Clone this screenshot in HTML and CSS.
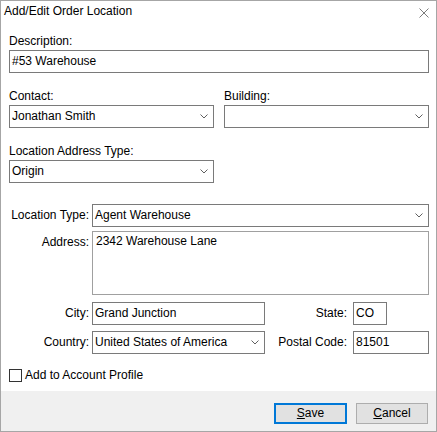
FILE: index.html
```html
<!DOCTYPE html>
<html lang="en">
<head>
<meta charset="utf-8">
<title>Add/Edit Order Location</title>
<link rel="stylesheet" href="styles.css">
</head>
<body>
<div class="dialog">
  <div class="titlebar">
    <span class="title">Add/Edit Order Location</span>
    <svg class="close" width="10" height="10" viewBox="0 0 10 10"><path d="M0.5 0.5 L9.5 9.5 M9.5 0.5 L0.5 9.5" stroke="#7c7c7c" stroke-width="1" fill="none"/></svg>
  </div>
  <div class="form">
    <div class="group">
      <div class="label">Description:</div>
      <div class="field">#53 Warehouse</div>
    </div>
    <div class="pair">
      <div class="group">
        <div class="label">Contact:</div>
        <div class="field select"><span>Jonathan Smith</span><svg class="chev" width="8" height="5" viewBox="0 0 8 5"><polyline points="0.5,0.5 4,4 7.5,0.5" fill="none" stroke="#606060" stroke-width="1"/></svg></div>
      </div>
      <div class="group">
        <div class="label">Building:</div>
        <div class="field select"><span></span><svg class="chev" width="8" height="5" viewBox="0 0 8 5"><polyline points="0.5,0.5 4,4 7.5,0.5" fill="none" stroke="#606060" stroke-width="1"/></svg></div>
      </div>
    </div>
    <div class="group gap16 half">
      <div class="label">Location Address Type:</div>
      <div class="field select"><span>Origin</span><svg class="chev" width="8" height="5" viewBox="0 0 8 5"><polyline points="0.5,0.5 4,4 7.5,0.5" fill="none" stroke="#606060" stroke-width="1"/></svg></div>
    </div>

    <div class="row row-type">
      <div class="rlabel">Location Type:</div>
      <div class="field select span3"><span>Agent Warehouse</span><svg class="chev" width="8" height="5" viewBox="0 0 8 5"><polyline points="0.5,0.5 4,4 7.5,0.5" fill="none" stroke="#606060" stroke-width="1"/></svg></div>
    </div>
    <div class="row row-address">
      <div class="rlabel top">Address:</div>
      <div class="area span3">2342 Warehouse Lane</div>
    </div>
    <div class="row row-city">
      <div class="rlabel">City:</div>
      <div class="field">Grand Junction</div>
      <div class="rlabel wide">State:</div>
      <div class="field state">CO</div>
    </div>
    <div class="row row-country">
      <div class="rlabel">Country:</div>
      <div class="field select"><span>United States of America</span><svg class="chev" width="8" height="5" viewBox="0 0 8 5"><polyline points="0.5,0.5 4,4 7.5,0.5" fill="none" stroke="#606060" stroke-width="1"/></svg></div>
      <div class="rlabel wide">Postal Code:</div>
      <div class="field">81501</div>
    </div>

    <div class="check">
      <span class="box"></span>
      <span class="check-label">Add to Account Profile</span>
    </div>
  </div>
  <div class="footer">
    <div class="btn default"><u>S</u>ave</div>
    <div class="btn"><u>C</u>ancel</div>
  </div>
</div>
</body>
</html>
```
FILE: styles.css
```css
* { box-sizing: border-box; }
html, body { margin: 0; padding: 0; background: #ffffff; }
body {
  font-family: "Liberation Sans", Arial, sans-serif;
  font-size: 12px;
  color: #000;
}
.dialog {
  width: 437px;
  height: 432px;
  border: 1px solid #a6a6a6;
  background: #ffffff;
  display: flex;
  flex-direction: column;
}
.titlebar {
  height: 33px;
  display: flex;
  justify-content: space-between;
  align-items: flex-start;
  padding-left: 3px;
  flex: none;
}
.title {
  line-height: 20px;
}
.close {
  display: block;
  margin-top: 7px;
  margin-right: 7px;
}
.form {
  flex: 1;
  padding: 0 7px 0 8px;
  display: flex;
  flex-direction: column;
}
.label {
  line-height: 15px;
  height: 15px;
  margin-bottom: 1px;
  white-space: nowrap;
}
.field {
  height: 23px;
  border: 1px solid #7a7a7a;
  background: #fff;
  display: flex;
  align-items: center;
  padding: 0 5px 1px 2px;
  line-height: 15px;
  white-space: nowrap;
  overflow: hidden;
}
.select {
  justify-content: space-between;
}
.select .chev {
  flex: none;
  margin-left: 4px;
}
.pair {
  margin-top: 16px;
  display: grid;
  grid-template-columns: 1fr 1fr;
  column-gap: 10px;
}
.gap16 { margin-top: 16px; }
.half { width: 205px; }

.row {
  display: grid;
  grid-template-columns: 83px 173px 88px 76px;
  align-items: center;
}
.row-type { margin-top: 21px; }
.row-address { margin-top: 4px; align-items: start; }
.row-city { margin-top: 7px; }
.row-country { margin-top: 6px; }
.rlabel {
  text-align: right;
  padding-right: 3px;
  line-height: 15px;
  white-space: nowrap;
}
.rlabel.wide { padding-right: 6px; }
.rlabel.top { padding-top: 4px; }
.span3 { grid-column: 2 / 5; }
.area {
  height: 64px;
  border: 1px solid #a0a0a0;
  padding: 2px 3px;
  line-height: 15px;
}
.state { width: 34px; }

.check {
  margin-top: 15px;
  display: flex;
  align-items: center;
  height: 13px;
}
.box {
  width: 13px;
  height: 13px;
  border: 1px solid #333333;
  background: #fff;
  flex: none;
}
.check-label {
  margin-left: 3px;
  line-height: 13px;
}

.footer {
  flex: none;
  height: 40px;
  background: #f0f0f0;
  display: flex;
  justify-content: flex-end;
  align-items: flex-start;
  padding: 12px 8px 0 0;
  gap: 9px;
}
.btn {
  width: 72px;
  height: 21px;
  border: 1px solid #adadad;
  background: #e1e1e1;
  display: flex;
  align-items: center;
  justify-content: center;
  line-height: 15px;
}
.btn.default {
  width: 73px;
  border: 2px solid #0078d7;
}
.btn u { text-decoration: underline; text-underline-offset: 1px; }
```
